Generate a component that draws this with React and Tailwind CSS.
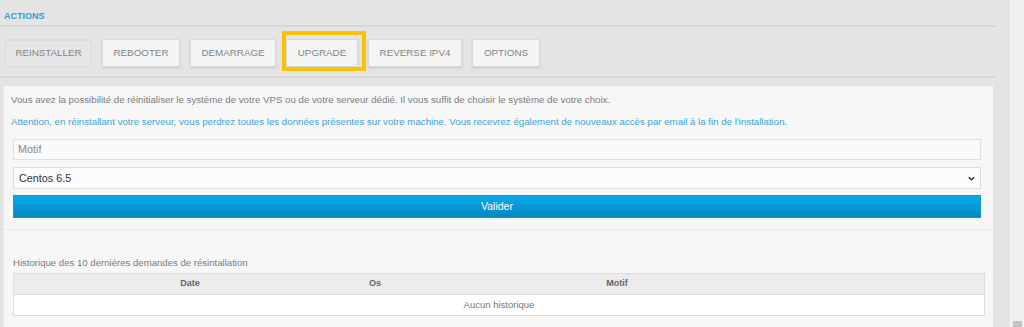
import React from 'react';

const TABS = [
  { label: 'REINSTALLER', w: 'w-[87px]', active: true },
  { label: 'REBOOTER', w: 'w-[78px]' },
  { label: 'DEMARRAGE', w: 'w-[86px]' },
  { label: 'UPGRADE', w: 'w-[72px]', highlight: true },
  { label: 'REVERSE IPV4', w: 'w-[94px]' },
  { label: 'OPTIONS', w: 'w-[68px]' },
];

const Tab = ({ tab }) => (
  <div className="relative">
    <button
      type="button"
      className={`${tab.w} h-[28px] flex items-center justify-center text-[9.8px] text-[#858585] border ${
        tab.active
          ? 'bg-[#e6e6e6] border-[#dadada] shadow-[inset_0_1px_2px_rgba(0,0,0,0.06)]'
          : 'bg-[#f4f4f4] border-[#d9d9d9] shadow-[0_1px_2px_rgba(0,0,0,0.12)]'
      }`}
    >
      {tab.label}
    </button>
    {tab.highlight && (
      <div className="absolute left-[-4px] top-[-8px] w-[84px] h-[40px] border-[4px] border-[#f6c400] pointer-events-none" />
    )}
  </div>
);

const App = () => {
  return (
    <div className="h-[327px] w-[1024px] overflow-hidden flex bg-[#e4e4e4] font-['Liberation_Sans',Arial,sans-serif]">
      <div className="w-[1010px] shrink-0 pr-[15px]">
        <div className="pt-[11px] pl-[4px] h-[25px] text-[9px] leading-[10px] font-bold text-[#2a9fd6]">ACTIONS</div>
        <div className="h-[2px] bg-[#d5d5d5]" />

        <div className="mt-[12px] pl-[5px] flex gap-[10px]">
          {TABS.map((t) => (
            <Tab key={t.label} tab={t} />
          ))}
        </div>

        <div className="mt-[9px] h-[2px] bg-[#d7d7d7]" />

        <div className="mt-[8px] ml-[3px] mr-[2px] bg-[#f7f7f7] border-l border-[#e9e9e9] h-[260px]">
          <div className="pl-[7px] pr-[12px] pt-[7px]">
            <p className="text-[9.7px] leading-[14px] text-[#7d7d7d]">
              Vous avez la possibilité de réinitialiser le système de votre VPS ou de votre serveur dédié. Il vous suffit de choisir le système de votre choix.
            </p>
            <p className="mt-[8px] text-[9.7px] leading-[14px] text-[#44a4cd]">
              Attention, en réinstallant votre serveur, vous perdrez toutes les données présentes sur votre machine. Vous recevrez également de nouveaux accès par email à la fin de l'installation.
            </p>
          </div>

          <div className="pl-[9px] pr-[12px]">
            <div className="mt-[10px] h-[21px] bg-[#fafafa] border border-[#e0e0e0] flex items-center pl-[4px] text-[10.8px] text-[#8a8a8a]">
              Motif
            </div>
            <div className="mt-[7px] h-[22px] bg-[#fbfbfb] border border-[#dedede] flex items-center justify-between pl-[5px] pr-[4px] text-[10.8px] text-[#333]">
              <span>Centos 6.5</span>
              <svg width="9" height="9" viewBox="0 0 10 10">
                <path d="M2 3.5 L5 6.5 L8 3.5" fill="none" stroke="#333" strokeWidth="1.6" />
              </svg>
            </div>
            <button
              type="button"
              className="mt-[6px] w-full h-[23px] bg-gradient-to-b from-[#08aae8] to-[#0088c3] border border-[#0a9ad4] text-white text-[10.5px] flex items-center justify-center"
            >
              Valider
            </button>
          </div>

          <div className="mt-[11px] h-[1px] bg-[#e9e9e9]" />

          <div className="pl-[9px] pr-[8px]">
            <p className="mt-[26px] text-[9.6px] leading-[14px] text-[#7d7d7d]">
              Historique des 10 dernières demandes de résintallation
            </p>
            <div className="mt-[3px] border border-[#dcdcdc] bg-white">
              <div className="h-[21px] bg-[#ececec] border-b border-[#dcdcdc] grid grid-cols-[352px_18px_466px_1fr] items-center text-[9px] font-bold text-[#666]">
                <span className="text-center">Date</span>
                <span className="text-center">Os</span>
                <span className="text-center">Motif</span>
                <span />
              </div>
              <div className="h-[20px] flex items-center justify-center text-[9.5px] text-[#777]">
                Aucun historique
              </div>
            </div>
          </div>
        </div>
      </div>
      <div className="flex-1 bg-[#f0f0f0] flex flex-col justify-end items-center">
        <div className="w-[9px] h-[6px] bg-[#c4c4c4]" />
      </div>
    </div>
  );
};

export default App;
